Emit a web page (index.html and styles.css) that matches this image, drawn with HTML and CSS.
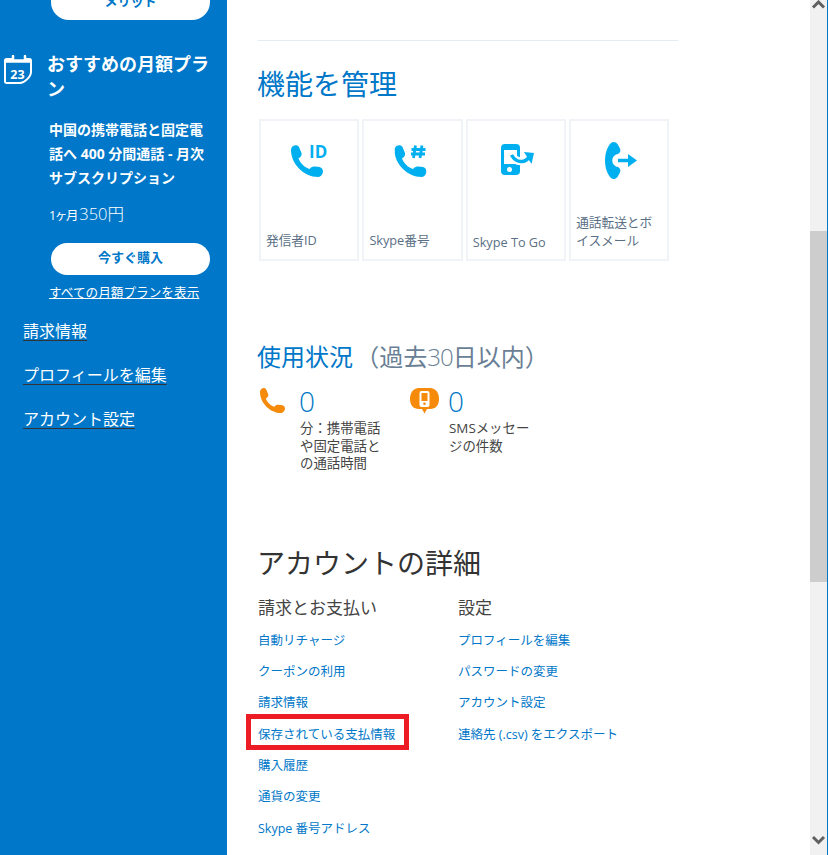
FILE: index.html
```html
<!DOCTYPE html>
<html lang="ja">
<head>
    <meta charset="UTF-8">
    <title>アカウント</title>
    <link rel="stylesheet" href="styles.css">
</head>
<body>
    <svg class="defs" width="0" height="0">
        <symbol id="phone" viewBox="0 0 32 32">
            <path d="M2 1C4 -0.500 7 0 8 2L10.500 8C11 10 10 12 8 13L7.500 13.300C9 18 13.500 22.500 18.500 24L19 23.500C20 22 22 21.500 24 21.500L28.500 22C31 22.500 32 24.500 32 27C31.500 30 29 32 27 32C13 32 0 19 0 5C0 3.500 0.800 2 2 1Z" fill="currentColor"/>
        </symbol>
    </svg>

    <!-- サイドバー -->
    <div class="sidebar">
        <a class="pill pill-top">メリット</a>

        <div class="plan-head">
            <svg class="calendar" viewBox="0 0 28 30">
                <path d="M8 4H2.500A1.500 1.500 0 0 0 1 5.500V26.500A1.500 1.500 0 0 0 2.500 28H16C20 28 27 22 27 17V5.500A1.500 1.500 0 0 0 25.500 4H22" fill="none" stroke="#fff" stroke-width="2"/>
                <path d="M1 6H27" stroke="#fff" stroke-width="3.500"/>
                <path d="M9 1V5M21 1V5" stroke="#fff" stroke-width="2.500" stroke-linecap="round"/>
                <text x="13.500" y="23.500" class="calendar-day">23</text>
            </svg>
            <h3 class="plan-title">おすすめの月額プラン</h3>
        </div>
        <p class="plan-desc">中国の携帯電話と固定電話へ 400 分間通話 - 月次サブスクリプション</p>
        <p class="plan-price"><span class="plan-per">1ヶ月</span><span class="plan-amount">350円</span></p>
        <a class="pill pill-buy">今すぐ購入</a>
        <a class="plan-all">すべての月額プランを表示</a>

        <nav class="side-nav">
            <a>請求情報</a>
            <a>プロフィールを編集</a>
            <a>アカウント設定</a>
        </nav>
    </div>

    <!-- メイン -->
    <div class="main">
        <hr class="rule">

        <h2 class="title-blue">機能を管理</h2>
        <div class="tiles">
            <div class="tile">
                <svg class="tile-icon" viewBox="0 0 48 44">
                    <use href="#phone" x="6" y="4" width="32" height="32"/>
                    <text x="24" y="17" class="tile-mark">ID</text>
                </svg>
                <span>発信者ID</span>
            </div>
            <div class="tile">
                <svg class="tile-icon" viewBox="0 0 48 44">
                    <use href="#phone" x="6.500" y="4" width="32" height="32"/>
                    <path d="M27.500 4.500L25.500 17M34 4.500L32 17M23.500 8.500H37.500M23 13H37" fill="none" stroke="currentColor" stroke-width="2.800"/>
                </svg>
                <span>Skype番号</span>
            </div>
            <div class="tile tile-low">
                <svg class="tile-icon" viewBox="0 0 48 44">
                    <rect x="9" y="3" width="19" height="31" rx="4" fill="currentColor"/>
                    <rect x="12" y="9" width="13" height="14" fill="#fff"/>
                    <circle cx="17.500" cy="28.500" r="2.500" fill="#fff"/>
                    <path d="M19.500 14C24 22 33 23 39 14" fill="none" stroke="#fff" stroke-width="8"/>
                    <path d="M19.500 14C24 22 33 23 38 15" fill="none" stroke="currentColor" stroke-width="3.500"/>
                    <path d="M32 11L42 12L39.500 23Z" fill="currentColor"/>
                </svg>
                <span>Skype To Go</span>
            </div>
            <div class="tile">
                <svg class="tile-icon" viewBox="0 0 48 44">
                    <path d="M16 2C18 0 21 1 22.500 3L25 7.500C26 10 25 12 23 13L21 13.500C16 16 16 23 21 25.500L23 26C25 27 26 29 25 31.500L22.500 36C21 38 18 39 16 37C8 29 8 10 16 2Z" fill="currentColor"/>
                    <path d="M23 19.500H36" stroke="currentColor" stroke-width="3.500"/>
                    <path d="M33 13L42 19.500L33 26Z" fill="currentColor"/>
                </svg>
                <span>通話転送とボイスメール</span>
            </div>
        </div>

        <h2 class="title-usage"><span class="title-usage-main">使用状況</span> （過去<span class="thin">30</span>日以内）</h2>
        <div class="stats">
            <div class="stat">
                <svg class="stat-icon stat-phone" viewBox="0 0 32 32"><use href="#phone" width="32" height="32"/></svg>
                <div class="stat-body">
                    <div class="stat-num">0</div>
                    <div class="stat-label">分：携帯電話や固定電話との通話時間</div>
                </div>
            </div>
            <div class="stat stat-sms">
                <svg class="stat-icon stat-bubble" viewBox="0 0 29 26">
                    <path d="M9 0H20C26 0 29 5 29 11C29 17 26 21 20 21H17L14.500 25.500L12 21H9C3 21 0 17 0 11C0 5 3 0 9 0Z" fill="#f58a0b"/>
                    <rect x="9.500" y="3" width="10" height="16" rx="2" fill="#fff"/>
                    <rect x="11.500" y="5" width="6" height="8" fill="#f58a0b"/>
                    <circle cx="14.500" cy="15.800" r="1.300" fill="#f58a0b"/>
                </svg>
                <div class="stat-body">
                    <div class="stat-num">0</div>
                    <div class="stat-label">SMSメッセージの件数</div>
                </div>
            </div>
        </div>

        <h2 class="title-dark">アカウントの詳細</h2>
        <div class="detail-cols">
            <div class="detail-col">
                <h4>請求とお支払い</h4>
                <a>自動リチャージ</a>
                <a>クーポンの利用</a>
                <a>請求情報</a>
                <a class="marked">保存されている支払情報</a>
                <a>購入履歴</a>
                <a>通貨の変更</a>
                <a>Skype 番号アドレス</a>
            </div>
            <div class="detail-col">
                <h4>設定</h4>
                <a>プロフィールを編集</a>
                <a>パスワードの変更</a>
                <a>アカウント設定</a>
                <a>連絡先 (.csv) をエクスポート</a>
            </div>
        </div>
    </div>

    <!-- スクロールバー -->
    <div class="scrollbar">
        <svg class="scroll-arrow" viewBox="0 0 17 10"><path d="M3 7.500L8.500 2L14 7.500" fill="none" stroke="#606060" stroke-width="3"/></svg>
        <div class="scroll-thumb"></div>
        <svg class="scroll-arrow scroll-arrow-down" viewBox="0 0 17 10"><path d="M3 2L8.500 7.500L14 2" fill="none" stroke="#606060" stroke-width="3"/></svg>
    </div>
    <div class="window-edge"></div>
</body>
</html>
```

FILE: styles.css
```css
html, body {
    height: 855px;
    overflow: hidden;
}
body {
    margin: 0;
    display: flex;
    background: #fff;
    font-family: "Open Sans", "Noto Sans CJK JP", sans-serif;
    color: #444;
}
.defs {
    position: absolute;
}
h2, h3, h4, p {
    margin: 0;
    font-weight: normal;
}

/* sidebar */
.sidebar {
    width: 227px;
    flex: none;
    background: #0077c8;
    color: #fff;
}
.pill {
    display: block;
    margin-left: 51px;
    width: 159px;
    background: #fff;
    color: #0077c8;
    text-align: center;
    font-weight: bold;
    font-size: 13px;
}
.pill-top {
    height: 37px;
    line-height: 37px;
    margin-top: -17px;
    border-radius: 18px;
}
.pill-buy {
    height: 32px;
    line-height: 29px;
    margin-top: 15px;
    border-radius: 16px;
}
.plan-head {
    display: flex;
    margin-top: 32px;
    padding-left: 4px;
}
.calendar {
    width: 28px;
    height: 30px;
    flex: none;
    margin-top: 3px;
}
.calendar-day {
    font-size: 12.500px;
    font-weight: bold;
    fill: #fff;
    text-anchor: middle;
}
.plan-title {
    width: 165px;
    margin-left: 15px;
    font-size: 18px;
    line-height: 25px;
    font-weight: bold;
}
.plan-desc {
    width: 160px;
    margin: 16px 0 0 49px;
    font-size: 14px;
    line-height: 24px;
    font-weight: bold;
}
.plan-price {
    margin: 12px 0 0 49px;
    line-height: 24px;
}
.plan-per {
    font-size: 12.500px;
    letter-spacing: -1.300px;
}
.plan-amount {
    margin-left: 2px;
    font-size: 16.500px;
    font-weight: 300;
}
.plan-all {
    display: block;
    margin: 8px 0 0 49px;
    font-size: 12.650px;
    line-height: 18px;
    text-decoration: underline;
}
.side-nav {
    display: flex;
    flex-direction: column;
    gap: 20px;
    align-items: flex-start;
    margin: 18px 0 0 23px;
    font-size: 16px;
    line-height: 24px;
}
.side-nav a {
    text-decoration: underline;
    text-decoration-color: #333;
    text-decoration-thickness: 1px;
    text-underline-offset: 3px;
}

/* main */
.main {
    flex: 1;
    padding: 40px 0 0 31px;
}
.rule {
    width: 420px;
    height: 1px;
    margin: 0;
    border: 0;
    background: #e3ecf2;
}
.title-blue {
    margin: 23px 0 0 -1px;
    font-size: 28px;
    line-height: 40px;
    color: #0077c8;
}
.tiles {
    display: flex;
    gap: 3.200px;
    margin: 15px 0 0 1px;
}
.tile {
    width: 100.200px;
    height: 142px;
    box-sizing: border-box;
    border: 2px solid #f0f4f8;
    padding: 0 4px 10px 5px;
    display: flex;
    flex-direction: column;
    justify-content: flex-end;
    position: relative;
    font-size: 12.700px;
    line-height: 18px;
    color: #5a6f85;
}
.tile-low {
    padding-bottom: 8px;
}
.tile-icon {
    position: absolute;
    top: 20px;
    left: 24px;
    width: 48px;
    height: 44px;
    color: #00aff0;
}
.tile-mark {
    font-size: 17px;
    font-weight: bold;
    fill: currentColor;
}
.title-usage {
    margin: 79px 0 0 -1px;
    font-size: 24px;
    line-height: 34px;
    word-spacing: -4px;
    color: #6a7f95;
}
.title-usage-main {
    color: #0077c8;
}
.thin {
    font-weight: 300;
    letter-spacing: -1px;
}
.stats {
    display: flex;
    margin: 13px 0 0 2px;
}
.stat {
    display: flex;
    width: 150px;
}
.stat-icon {
    flex: none;
    margin-top: 1px;
}
.stat-phone {
    width: 25px;
    height: 25px;
    margin-right: 15px;
    color: #f58a0b;
}
.stat-bubble {
    width: 29px;
    height: 26px;
    margin-right: 10px;
}
.stat-num {
    margin: -1px 0 0 -1px;
    font-size: 28px;
    line-height: 30px;
    font-weight: 300;
    color: #0077c8;
}
.stat-label {
    width: 88px;
    margin-top: 4px;
    font-size: 13.400px;
    line-height: 17.600px;
}
.title-dark {
    margin: 70px 0 0 -1px;
    font-size: 28px;
    line-height: 40px;
    color: #333;
}
.detail-cols {
    display: flex;
    margin-top: 13px;
}
.detail-col {
    width: 200px;
    display: flex;
    flex-direction: column;
    align-items: flex-start;
    font-size: 12.500px;
    line-height: 31.300px;
    color: #0077c8;
}
.detail-col h4 {
    margin-bottom: 5px;
    font-size: 17px;
    line-height: 24px;
    color: #444;
}
.marked {
    position: relative;
}
.marked::after {
    content: "";
    position: absolute;
    top: -5px;
    left: -12px;
    right: -14px;
    bottom: 0;
    border: 5px solid #ed1c24;
}

/* scrollbar */
.scrollbar {
    width: 17px;
    flex: none;
    background: #f1f1f1;
    display: flex;
    flex-direction: column;
}
.scroll-arrow {
    width: 17px;
    height: 10px;
    flex: none;
}
.scroll-thumb {
    height: 351px;
    margin-top: 221px;
    background: #cdcdcd;
}
.scroll-arrow-down {
    margin-top: auto;
    margin-bottom: 10px;
}
.window-edge {
    width: 1px;
    flex: none;
    margin-right: 1px;
    background: #0077c8;
}
```
